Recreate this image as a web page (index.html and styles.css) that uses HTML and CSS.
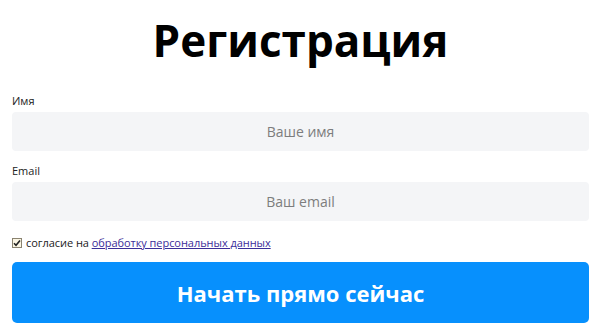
FILE: index.html
```html
<!DOCTYPE html>
<html>
  <head>
    <title>Регистрация</title>
    <link rel="stylesheet" href="styles.css">
  </head>

  <body>
    <div class="page">
      <h1 class="title">Регистрация</h1>

      <form class="form" id="regForm">
        <label class="label" for="name">Имя</label>
        <input class="field" type="text" id="name" name="name" placeholder="Ваше имя" />

        <label class="label" for="email">Email</label>
        <input class="field" type="email" id="email" name="email" placeholder="Ваш email" />

        <div class="agree">
          <span class="check">
            <svg width="8" height="8" viewBox="0 0 8 8">
              <path d="M1 4.2 L3 6.2 L7 1.4" fill="none" stroke="#222" stroke-width="1.6" />
            </svg>
          </span>
          <span>согласие на <a href="#">обработку персональных данных</a></span>
        </div>

        <button class="button" type="button">Начать прямо сейчас</button>
      </form>
    </div>
  </body>
</html>
```

FILE: styles.css
```css
body {
  font-family: "Open Sans", Arial, sans-serif;
  background-color: #fff;
  margin: 0;
  padding: 0;
}

.page {
  padding: 10px 11px 0 12px;
}

.title {
  margin: 0;
  font-size: 44px;
  line-height: 60px;
  font-weight: 700;
  text-align: center;
  color: #000;
}

.form {
  display: flex;
  flex-direction: column;
  margin-top: 23px;
}

.label {
  font-size: 11px;
  line-height: 15px;
  color: #222;
  margin-bottom: 4px;
}

.field {
  height: 39px;
  box-sizing: border-box;
  border: none;
  border-radius: 4px;
  background-color: #f4f5f7;
  font-family: inherit;
  font-size: 14px;
  text-align: center;
  color: #333;
  margin-bottom: 12px;
}

.field::placeholder {
  color: #7d7d7d;
}

.agree {
  display: flex;
  align-items: center;
  gap: 4px;
  font-size: 11px;
  line-height: 15px;
  color: #222;
  margin-top: 2px;
  letter-spacing: -0.05px;
}

.agree a {
  color: #3b2d99;
}

.check {
  width: 8px;
  height: 8px;
  border: 1px solid #8a8370;
  background-color: #fbf6e4;
  display: flex;
  align-items: center;
  justify-content: center;
}

.button {
  margin-top: 12px;
  height: 61px;
  border: none;
  border-radius: 5px;
  background-color: #0790fd;
  color: #fff;
  font-family: inherit;
  font-size: 22px;
  font-weight: 700;
  cursor: pointer;
}
```
